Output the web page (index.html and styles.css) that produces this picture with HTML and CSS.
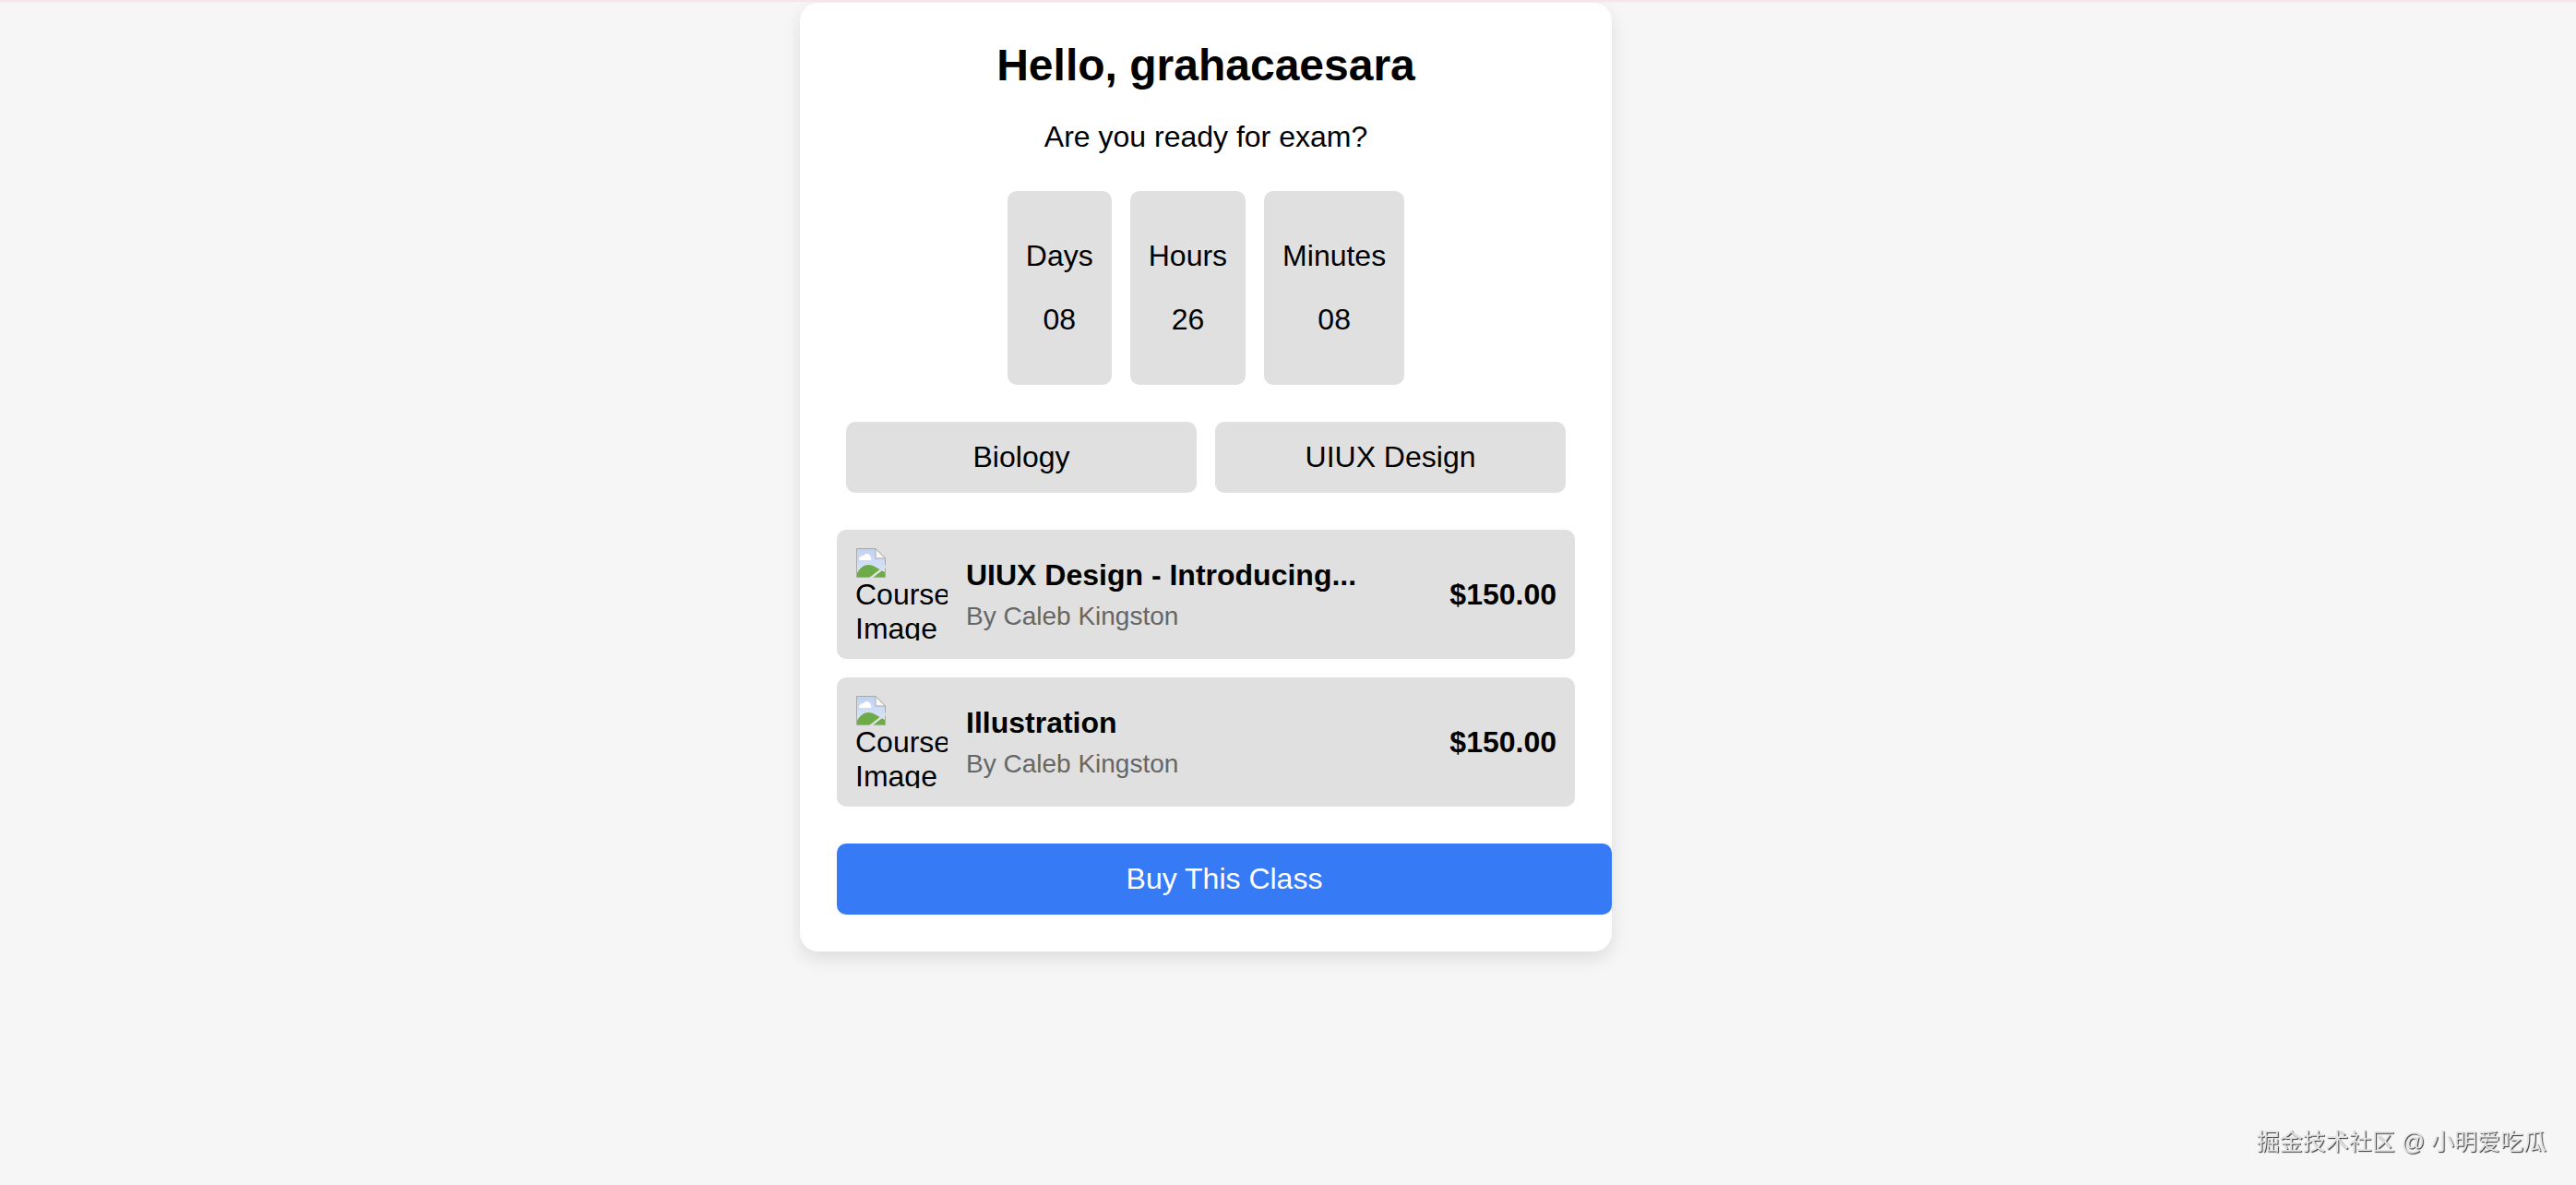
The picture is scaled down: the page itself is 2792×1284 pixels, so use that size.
FILE: index.html
```html
<!DOCTYPE html>
<html lang="en">
<head>
    <meta charset="UTF-8">
    <meta name="viewport" content="width=device-width, initial-scale=1.0">
    <title>Buy This Class</title>
    <link rel="stylesheet" href="styles.css">
</head>
<body>

<!-- Icon used by both course thumbnails -->
<svg class="defs" width="0" height="0">
    <defs>
        <linearGradient id="sky" x1="0" y1="0" x2="0" y2="1">
            <stop offset="0" stop-color="#bfd2f4"/>
            <stop offset="1" stop-color="#dfe7f7"/>
        </linearGradient>
        <symbol id="broken-image" viewBox="0 0 32 32">
            <path d="M.5.5H21L31.5 11V31.5H.5Z" fill="url(#sky)" stroke="#a9a9a9"/>
            <path d="M21 .5V11H31.5Z" fill="#f8f8f8" stroke="#a9a9a9"/>
            <path d="M3 13c0-3 2-5 5-5 1-2 5-3 7 0 1 2 2 5 1 5Z" fill="#fff"/>
            <path d="M1 31V27C4 21 9 18 13 18c6 0 12 5 18 8v5Z" fill="#6cab48"/>
            <path d="M14 32 32 18v3L18 32Z" fill="#e0e0e0"/>
        </symbol>
    </defs>
</svg>

<div class="card">
    <h1>Hello, grahacaesara</h1>
    <p class="intro">Are you ready for exam?</p>

    <!-- Countdown -->
    <div class="countdown">
        <div class="count-box"><p>Days</p><p>08</p></div>
        <div class="count-box"><p>Hours</p><p>26</p></div>
        <div class="count-box"><p>Minutes</p><p>08</p></div>
    </div>

    <!-- Categories -->
    <div class="tags">
        <div class="tag">Biology</div>
        <div class="tag">UIUX Design</div>
    </div>

    <!-- Course list -->
    <div class="courses">
        <div class="course">
            <div class="thumb"><svg class="broken" width="32" height="32"><use href="#broken-image"/></svg>Course Image</div>
            <div class="course-info">
                <div class="course-title">UIUX Design - Introducing...</div>
                <div class="course-author">By Caleb Kingston</div>
            </div>
            <div class="price">$150.00</div>
        </div>
        <div class="course">
            <div class="thumb"><svg class="broken" width="32" height="32"><use href="#broken-image"/></svg>Course Image</div>
            <div class="course-info">
                <div class="course-title">Illustration</div>
                <div class="course-author">By Caleb Kingston</div>
            </div>
            <div class="price">$150.00</div>
        </div>
    </div>

    <button class="buy">Buy This Class</button>
</div>

<div class="watermark">掘金技术社区 @ 小明爱吃瓜</div>

</body>
</html>
```

FILE: styles.css
```css
html {
    height: 100%;
}

body {
    margin: 0;
    min-height: 100%;
    background-color: #f6f6f6;
    border-top: 2px solid #f8e3e9; /* Thin pink line at the top */
    box-sizing: border-box;
    font-family: "Liberation Sans", Arial, sans-serif;
    font-size: 32px;
    color: #000;
}

.defs {
    position: absolute;
}

.card {
    box-sizing: content-box;
    width: 800px;
    margin: 1px 0 0 867px;
    padding: 40px;
    background-color: #fff;
    border-radius: 20px;
    box-shadow: 0 8px 20px rgba(0, 0, 0, 0.1);
}

h1 {
    margin: 0;
    font-size: 48px;
    text-align: center;
}

.intro {
    margin: 32px 0 40px;
    text-align: center;
}

.countdown {
    display: flex;
    justify-content: center;
    gap: 20px;
    margin-bottom: 40px;
}

.count-box {
    padding: 20px;
    background-color: #e0e0e0;
    border-radius: 10px;
    text-align: center;
}

.count-box p {
    margin: 32px 0;
}

.tags {
    display: flex;
    gap: 20px;
    padding: 0 10px;
    margin-bottom: 40px;
}

.tag {
    flex: 1;
    padding: 20px;
    background-color: #e0e0e0;
    border-radius: 10px;
    text-align: center;
}

.courses {
    display: flex;
    flex-direction: column;
    gap: 20px;
    margin-bottom: 40px;
}

.course {
    display: flex;
    align-items: center;
    gap: 20px;
    padding: 20px;
    background-color: #e0e0e0;
    border-radius: 10px;
}

.thumb {
    flex: none;
    width: 100px;
    height: 100px;
    overflow: hidden;
}

.broken {
    display: block;
    margin-left: 1px;
}

.course-info {
    flex: 1;
}

.course-title {
    font-weight: bold;
}

.course-author {
    margin-top: 10px;
    font-size: 28px;
    color: #666;
}

.price {
    font-weight: bold;
}

.buy {
    display: block;
    box-sizing: content-box;
    width: 100%;
    padding: 20px;
    border: none;
    border-radius: 10px;
    background-color: #377af6;
    color: #fff;
    font-family: inherit;
    font-size: 32px;
    cursor: pointer;
}

.watermark {
    position: fixed;
    right: 32px;
    bottom: 31px;
    font-family: "Liberation Sans", "Noto Sans CJK SC", sans-serif;
    font-size: 25px;
    color: #e4e4e4;
    text-shadow: 1px 1px 1px rgba(0, 0, 0, 0.8);
}
```
